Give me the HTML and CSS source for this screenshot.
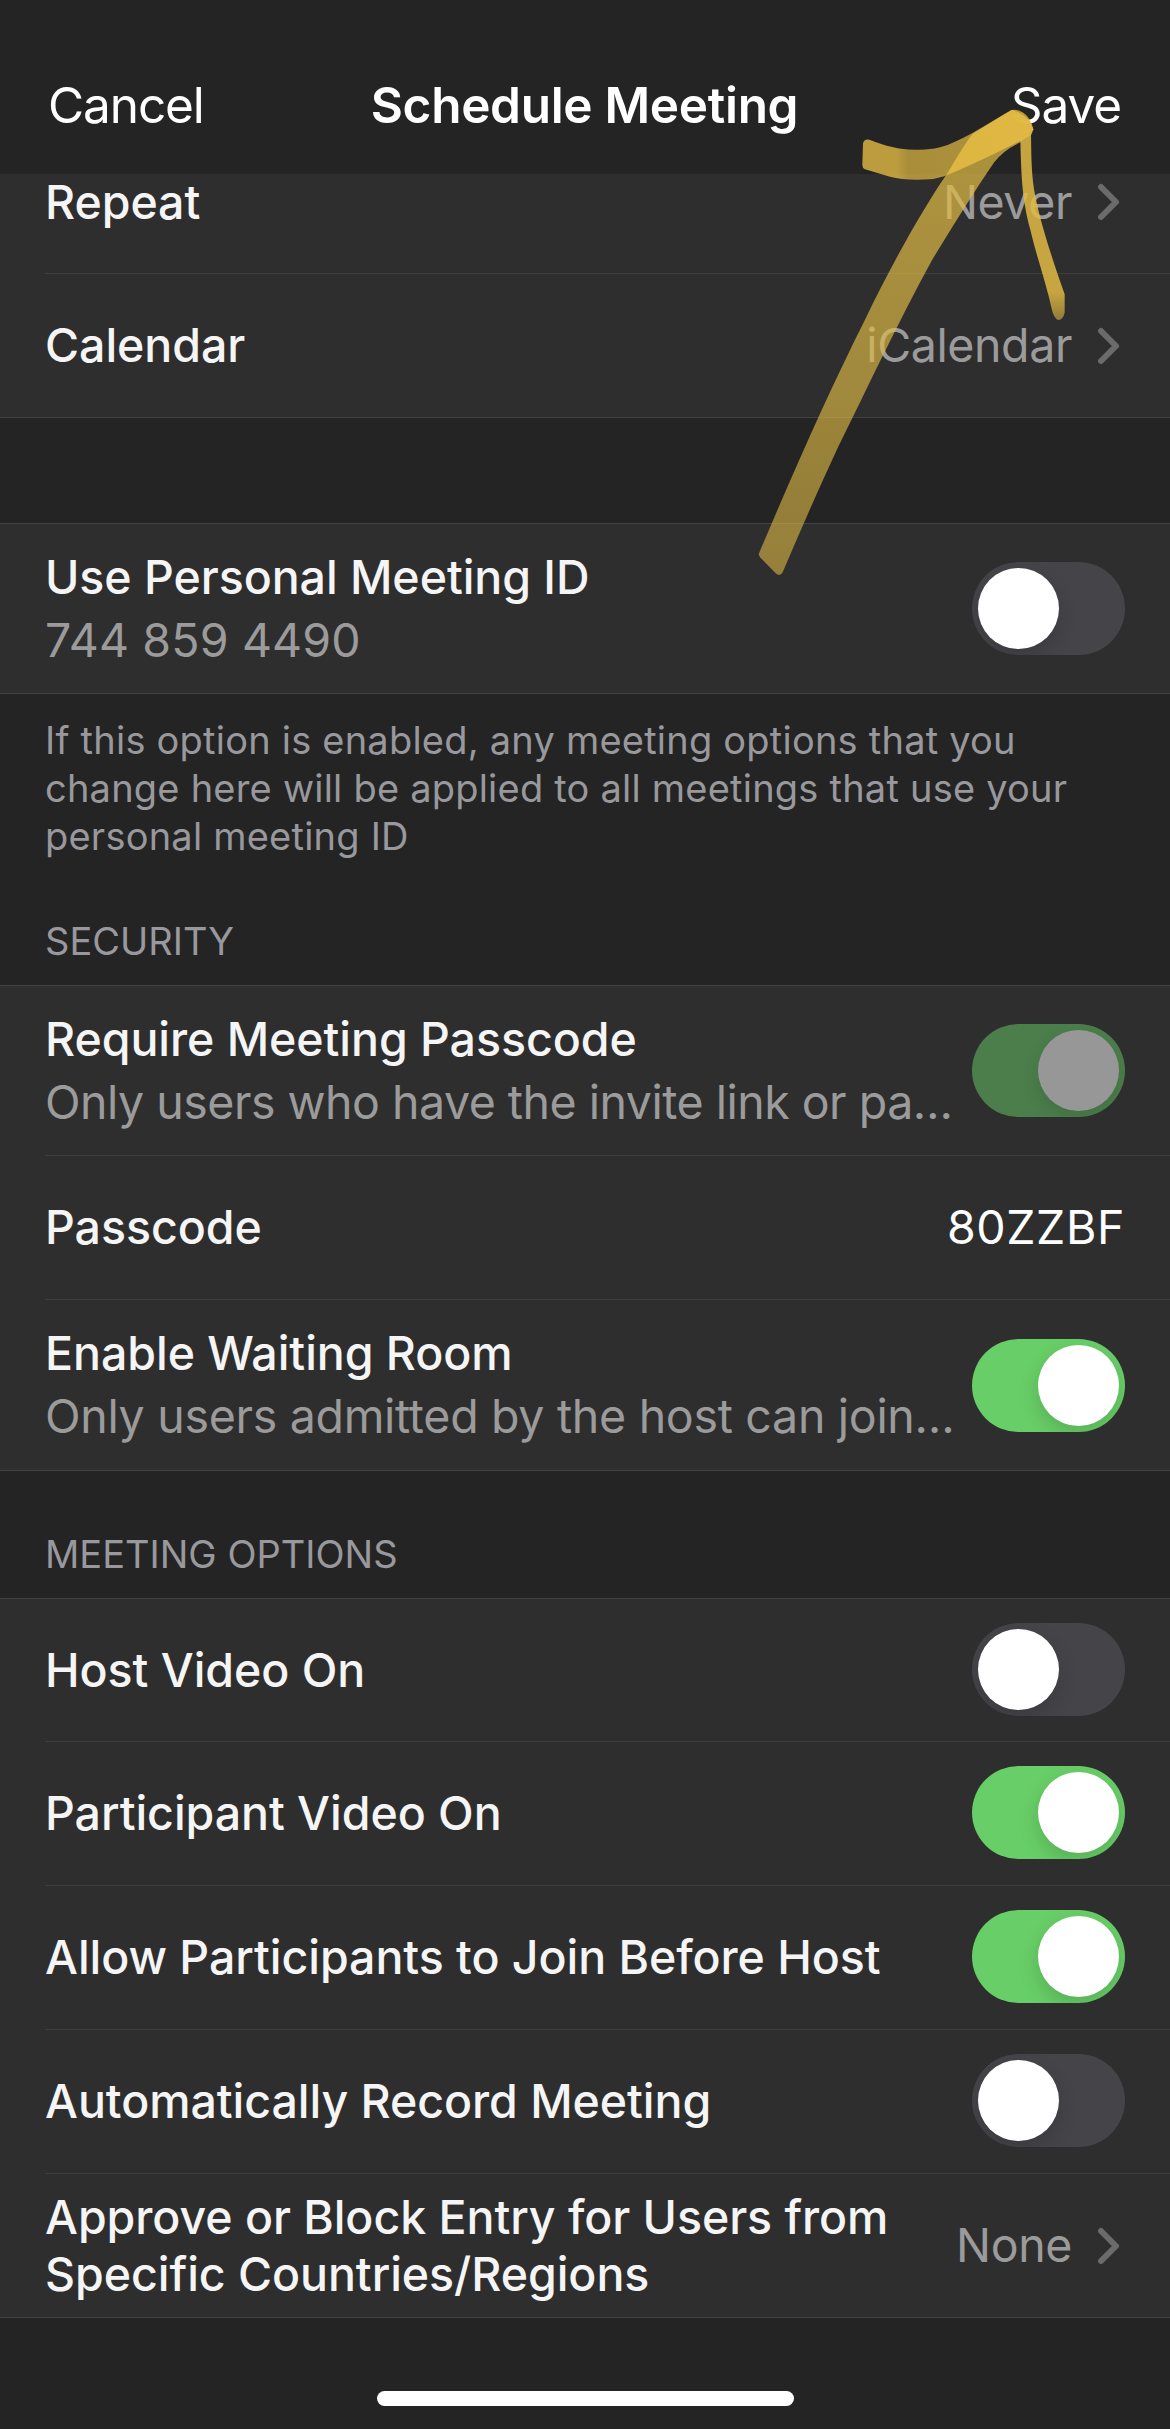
FILE: index.html
```html
<!DOCTYPE html>
<html lang="en">
<head>
  <meta charset="UTF-8">
  <meta name="viewport" content="width=device-width, initial-scale=1.0">
  <title>Schedule Meeting</title>
  <link rel="stylesheet" href="styles.css">
</head>
<body>

  <div class="screen">
    <!-- Nav bar -->
    <header class="navbar">
      <span class="nav-btn">Cancel</span>
      <h1>Schedule Meeting</h1>
      <span class="nav-btn right">Save</span>
    </header>

    <!-- Repeat / Calendar -->
    <section class="group first">
      <div class="row scrolled">
        <span class="label">Repeat</span>
        <span class="value">Never</span>
        <svg class="chevron" viewBox="0 0 24 38"><path d="M4 4 L19 19 L4 34"/></svg>
      </div>
      <div class="row">
        <span class="label">Calendar</span>
        <span class="value">iCalendar</span>
        <svg class="chevron" viewBox="0 0 24 38"><path d="M4 4 L19 19 L4 34"/></svg>
      </div>
    </section>

    <!-- Personal meeting ID -->
    <section class="group pmi">
      <div class="row tall">
        <div class="text">
          <span class="label">Use Personal Meeting ID</span>
          <span class="sub digits">744 859 4490</span>
        </div>
        <span class="toggle"></span>
      </div>
    </section>
    <p class="note">If this option is enabled, any meeting options that you<br>change here will be applied to all meetings that use your<br>personal meeting ID</p>

    <!-- Security -->
    <h2 class="security-title">SECURITY</h2>
    <section class="group">
      <div class="row tall">
        <div class="text">
          <span class="label">Require Meeting Passcode</span>
          <span class="sub tight">Only users who have the invite link or pa…</span>
        </div>
        <span class="toggle on disabled"></span>
      </div>
      <div class="row">
        <span class="label">Passcode</span>
        <span class="value code">80ZZBF</span>
      </div>
      <div class="row tall">
        <div class="text">
          <span class="label">Enable Waiting Room</span>
          <span class="sub">Only users admitted by the host can join…</span>
        </div>
        <span class="toggle on"></span>
      </div>
    </section>

    <!-- Meeting options -->
    <h2 class="options-title">MEETING OPTIONS</h2>
    <section class="group options">
      <div class="row">
        <span class="label">Host Video On</span>
        <span class="toggle"></span>
      </div>
      <div class="row">
        <span class="label">Participant Video On</span>
        <span class="toggle on"></span>
      </div>
      <div class="row">
        <span class="label">Allow Participants to Join Before Host</span>
        <span class="toggle on"></span>
      </div>
      <div class="row">
        <span class="label">Automatically Record Meeting</span>
        <span class="toggle"></span>
      </div>
      <div class="row">
        <span class="label">Approve or Block Entry for Users from<br>Specific Countries/Regions</span>
        <span class="value">None</span>
        <svg class="chevron" viewBox="0 0 24 38"><path d="M4 4 L19 19 L4 34"/></svg>
      </div>
    </section>

    <div class="home-bar"></div>

    <!-- Marker arrow pointing at Save -->
    <svg class="arrow" viewBox="0 0 1410 1568" preserveAspectRatio="none">
      <defs>
        <linearGradient id="shaft" x1="0" y1="1" x2="0" y2="0">
          <stop offset="0" stop-color="#e0bb45" stop-opacity=".58"/>
          <stop offset="1" stop-color="#e0bb45" stop-opacity=".74"/>
        </linearGradient>
        <linearGradient id="wing" x1="0" y1="0" x2="1" y2="0">
          <stop offset="0" stop-color="#e2ba43" stop-opacity=".8"/>
          <stop offset=".2" stop-color="#e2ba43" stop-opacity=".8"/>
          <stop offset=".27" stop-color="#e2ba43" stop-opacity=".7"/>
          <stop offset=".6" stop-color="#e2ba43" stop-opacity=".72"/>
          <stop offset="1" stop-color="#e2ba43" stop-opacity=".78"/>
        </linearGradient>
        <linearGradient id="barb" x1="0" y1="0" x2="0" y2="1">
          <stop offset="0" stop-color="#e2ba43" stop-opacity=".85"/>
          <stop offset=".85" stop-color="#e2ba43" stop-opacity=".85"/>
          <stop offset="1" stop-color="#e2ba43" stop-opacity=".55"/>
        </linearGradient>
      </defs>
      <path fill="url(#shaft)" d="M176 1412 C280 1180 390 950 495 755 C575 600 665 450 742 345 Q790 268 818 235 L935 168 Q985 180 1000 222 L962 258 Q910 280 882 315 C820 400 760 490 695 590 C590 770 500 950 415 1110 C350 1240 300 1350 248 1462 Q240 1475 228 1466 L180 1420 Z"/>
      <path fill="url(#wing)" d="M489 262 Q492 248 508 251 C560 269 600 280 650 279 C700 280 730 273 770 255 C830 230 880 195 935 168 Q950 164 970 176 Q992 190 1000 222 L995 236 C950 262 880 290 820 318 C780 335 740 355 700 361 Q620 367 570 355 L495 334 Q486 330 487 320 Z"/>
      <path fill="#e2ba43" fill-opacity=".75" d="M742 348 Q790 268 818 235 L935 168 Q985 180 1000 222 L990 240 Q910 280 820 318 Z"/>
      <path fill="url(#barb)" d="M961 245 L993 235 C994 280 993 330 1002 390 C1015 460 1045 555 1094 684 L1094 735 Q1088 758 1074 756 Q1064 752 1057 732 C1038 650 1010 580 990 500 C970 430 963 370 961 245 Z"/>
    </svg>
  </div>

</body>
</html>
```
FILE: styles.css
```css
* {
  margin: 0;
  padding: 0;
  box-sizing: border-box;
}

body {
  background: #242424;
  font-family: Inter, 'Noto Sans', sans-serif;
  color: #f5f5f5;
}

.screen {
  position: relative;
  width: 1170px;
  height: 2429px;
  overflow: hidden;
}

/* Nav bar */
.navbar {
  display: grid;
  grid-template-columns: 1fr auto 1fr;
  height: 174px;
  padding: 75px 49px 0 48px;
  font-size: 49.5px;
  line-height: 60px;
  color: #fff;
}

.navbar h1 {
  font-size: 49.5px;
  font-weight: 600;
  letter-spacing: -0.3px;
}

.nav-btn {
  letter-spacing: -1.1px;
}

.right {
  text-align: right;
}

/* Grouped rows */
.group {
  background: #2e2e2e;
  border-top: 1px solid #424242;
  border-bottom: 1px solid #424242;
}

.group.first {
  border-top: none;
}

.pmi {
  margin-top: 105px;
}

.row {
  display: flex;
  align-items: center;
  height: 144px;
  margin-left: 45px;
  padding-right: 45px;
  border-bottom: 1px solid #3f3f3f;
}

.row:last-child {
  height: 143px;
  border-bottom: none;
}

.row.tall {
  height: 170px;
}

.pmi .row.tall {
  height: 169px;
}

.options .row:first-child {
  height: 143px;
}

.row.scrolled {
  height: 100px;
  padding-bottom: 43px;
}

.label {
  flex: 1;
  font-size: 46.5px;
  font-weight: 500;
  line-height: 57px;
  letter-spacing: -0.05px;
  white-space: nowrap;
}

.text {
  flex: 1;
  display: flex;
  flex-direction: column;
  gap: 6px;
}

.sub {
  font-size: 46.5px;
  line-height: 57px;
  letter-spacing: -0.3px;
  color: #9b9b9b;
  white-space: nowrap;
}

.sub.tight {
  letter-spacing: -0.5px;
}

.sub.digits {
  letter-spacing: 0.15px;
}

.value {
  font-size: 46.5px;
  line-height: 57px;
  letter-spacing: -0.4px;
  color: #9b9b9b;
}

.value.code {
  letter-spacing: 0.6px;
  color: #fff;
}

.chevron {
  width: 24px;
  height: 38px;
  margin: 0 4px 0 25px;
  fill: none;
  stroke: #6b6b6b;
  stroke-width: 6;
  stroke-linecap: round;
  stroke-linejoin: round;
}

/* Switch */
.toggle {
  flex: none;
  display: flex;
  width: 153px;
  height: 93px;
  padding: 6px;
  border-radius: 47px;
  background: #454549;
  overflow: hidden;
}

.toggle::before {
  content: "";
  width: 81px;
  height: 81px;
  border-radius: 50%;
  background: #fff;
  box-shadow: 0 8px 20px rgba(0,0,0,0.15);
}

.toggle.on {
  justify-content: flex-end;
  background: #68ce67;
}

.toggle.disabled {
  opacity: 0.5;
}

.options .toggle {
  margin-bottom: 2px;
}

/* Texts between groups */
.note {
  padding: 22px 45px 0;
  font-size: 38px;
  line-height: 48px;
  letter-spacing: 0.22px;
  color: #98989d;
  white-space: nowrap;
}

h2 {
  padding: 0 45px 20px;
  font-size: 38px;
  font-weight: 400;
  line-height: 48px;
  color: #98989d;
}

.security-title {
  margin-top: 57px;
}

.options-title {
  margin-top: 59px;
}

.home-bar {
  width: 417px;
  height: 15px;
  margin: 73px auto 0;
  border-radius: 8px;
  background: #fff;
}

.arrow {
  position: absolute;
  top: 50px;
  left: 700px;
  width: 470px;
  height: 560px;
}
```
